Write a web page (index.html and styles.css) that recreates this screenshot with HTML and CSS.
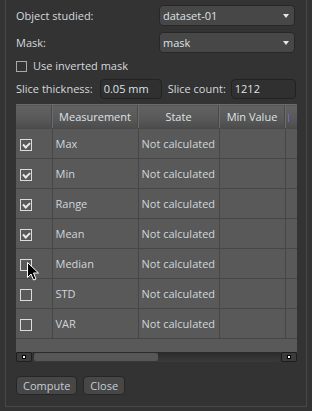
FILE: index.html
```html
<!DOCTYPE html>
<html>
<head>
<meta charset="utf-8">
<link rel="stylesheet" href="styles.css">
</head>
<body>
<div class="frame">
  <div class="form-row">
    <span class="label">Object studied:</span>
    <div class="combo"><span>dataset-01</span><i class="arrow"></i></div>
  </div>
  <div class="form-row">
    <span class="label">Mask:</span>
    <div class="combo"><span>mask</span><i class="arrow"></i></div>
  </div>
  <div class="check-row">
    <span class="cb cb-plain"></span>
    <span class="label">Use inverted mask</span>
  </div>
  <div class="slice-row">
    <span class="label">Slice thickness:</span>
    <div class="input w-thick">0.05 mm</div>
    <span class="label lbl-count">Slice count:</span>
    <div class="input w-count">1212</div>
  </div>
  <div class="table-wrap">
    <div class="table-clip">
      <table class="grid">
        <thead>
          <tr>
            <th class="c0"></th>
            <th class="c1">Measurement</th>
            <th class="c2">State</th>
            <th class="c3">Min Value</th>
            <th class="c4"><span class="peek"></span></th>
          </tr>
        </thead>
        <tbody>
          <tr><td class="c0"><span class="cb on"></span></td><td>Max</td><td>Not calculated</td><td></td><td></td></tr>
          <tr><td class="c0"><span class="cb on"></span></td><td>Min</td><td>Not calculated</td><td></td><td></td></tr>
          <tr><td class="c0"><span class="cb on"></span></td><td>Range</td><td>Not calculated</td><td></td><td></td></tr>
          <tr><td class="c0"><span class="cb on"></span></td><td>Mean</td><td>Not calculated</td><td></td><td></td></tr>
          <tr><td class="c0"><span class="cb"></span></td><td>Median</td><td>Not calculated</td><td></td><td></td></tr>
          <tr><td class="c0"><span class="cb"></span></td><td>STD</td><td>Not calculated</td><td></td><td></td></tr>
          <tr><td class="c0"><span class="cb"></span></td><td>VAR</td><td>Not calculated</td><td></td><td></td></tr>
        </tbody>
      </table>
    </div>
    <div class="hscroll">
      <div class="sbtn"><i></i></div>
      <div class="track"><div class="thumb"></div></div>
      <div class="sbtn"><i></i></div>
    </div>
  </div>
  <div class="buttons">
    <div class="btn">Compute</div>
    <div class="btn">Close</div>
  </div>
  <svg class="cursor" width="13" height="20" viewBox="0 0 13 20">
    <path d="M0.5 0.5 L0.5 15.5 L4 12 L6.5 18 L9 17 L6.5 11 L11.5 11 Z" fill="#000" stroke="#fff" stroke-width="1"/>
  </svg>
</div>
</body>
</html>
```

FILE: styles.css
```css
* { box-sizing: border-box; }
html, body { margin: 0; padding: 0; }
body {
  background: #333333;
  font-family: "Open Sans", "Noto Sans", sans-serif;
  font-size: 11px;
  color: #d3d9de;
  width: 312px;
  height: 411px;
  overflow: hidden;
}
.frame {
  position: relative;
  margin: 0 5px;
  height: 407px;
  border: 1px solid #484848;
  border-top: none;
  padding: 5px 10px 0 10px;
  display: flex;
  flex-direction: column;
}
.label { white-space: nowrap; line-height: 14px; }
.form-row {
  display: flex;
  align-items: center;
  justify-content: space-between;
  height: 21px;
  margin-bottom: 6px;
}
.combo {
  width: 136px;
  height: 21px;
  margin-right: 1px;
  background: #474747;
  border: 1px solid #272727;
  border-radius: 4px;
  display: flex;
  align-items: center;
  justify-content: space-between;
  padding: 0 4px 0 3px;
  color: #dde2e6;
}
.arrow {
  width: 0; height: 0;
  border-left: 3px solid transparent;
  border-right: 3px solid transparent;
  border-top: 4px solid #e6e6e6;
  margin-right: 1px;
}
.check-row {
  display: flex;
  align-items: center;
  height: 26px;
  margin-top: -6px;
}
.cb {
  display: inline-block;
  width: 12px; height: 12px;
  border: 1px solid #dcdcdc;
  position: relative;
}
.cb-plain { border-color: #a9a9a9; margin-right: 6px; width: 11px; height: 11px; }
.cb.on::after {
  content: "";
  position: absolute;
  left: 2px; top: 1px;
  width: 5px; height: 3px;
  border-left: 2px solid #e8e8e8;
  border-bottom: 2px solid #e8e8e8;
  transform: translate(0, 1px) rotate(-45deg);
  transform-origin: center;
}
.slice-row {
  display: flex;
  align-items: center;
  height: 20px;
}
.input {
  height: 20px;
  background: #303030;
  border: 1px solid #222222;
  border-radius: 4px;
  padding: 0 3px;
  line-height: 18px;
  color: #dde2e6;
}
.w-thick { width: 62px; margin-left: 7px; }
.lbl-count { margin-left: 6px; }
.w-count { width: 65px; margin-left: 5px; }
.table-wrap {
  margin-top: 5px;
  width: 281px;
  background: #595959;
}
.table-clip {
  width: 281px;
  height: 248px;
  overflow: hidden;
}
.grid {
  border-collapse: collapse;
  table-layout: fixed;
  width: 349px;
}
.grid th {
  height: 24px;
  padding: 0;
  font-weight: normal;
  text-align: center;
  color: #dde2e6;
  background: linear-gradient(#626262, #585858 60%, #4c4c4c);
  border-right: 1px solid #6a6a6a;
  box-shadow: inset -1px 0 0 #4a4a4a;
  border-bottom: 1px solid #4a4a4a;
  border-top: 1px solid #6a6a6a;
}
.grid th.c4 { text-align: left; padding-left: 2px; }
.peek {
  display: inline-block;
  width: 1px;
  height: 8px;
  background: #6a6ab8;
  vertical-align: middle;
}
.grid td {
  height: 30px;
  padding: 0 0 0 3px;
  border-right: 1px solid #464646;
  border-bottom: 1px solid #464646;
  color: #d0d6db;
  white-space: nowrap;
}
.grid td.c0 { padding: 0 0 0 4px; }
.grid td.c0 .cb { vertical-align: middle; margin-top: -1px; }
.c0 { width: 36px; }
.c1 { width: 86px; }
.c2 { width: 81px; }
.c3 { width: 66px; }
.c4 { width: 80px; }
.hscroll {
  height: 10px;
  display: flex;
  background: #333;
}
.sbtn {
  width: 16px;
  height: 10px;
  background: #3c3c3c;
  border: 1px solid #1e1e1e;
  border-radius: 2px;
  display: flex;
  align-items: center;
  justify-content: center;
}
.sbtn i {
  width: 4px; height: 4px;
  background: #fff;
  border: 1px solid #000;
}
.track {
  flex: 1;
  background: linear-gradient(#2a2a2a, #3a3a3a);
  border-radius: 2px;
  padding: 1px;
  margin: 0 1px;
}
.thumb {
  width: 124px;
  height: 8px;
  background: #575757;
  border-radius: 2px;
}
.buttons {
  display: flex;
  gap: 6px;
  margin-top: 14px;
}
.btn {
  height: 19px;
  padding: 0 6px;
  background: #474747;
  border: 1px solid #262626;
  border-radius: 4px;
  line-height: 17px;
  color: #c4ced6;
}
.cursor {
  position: absolute;
  left: 21px;
  top: 262px;
}
```
